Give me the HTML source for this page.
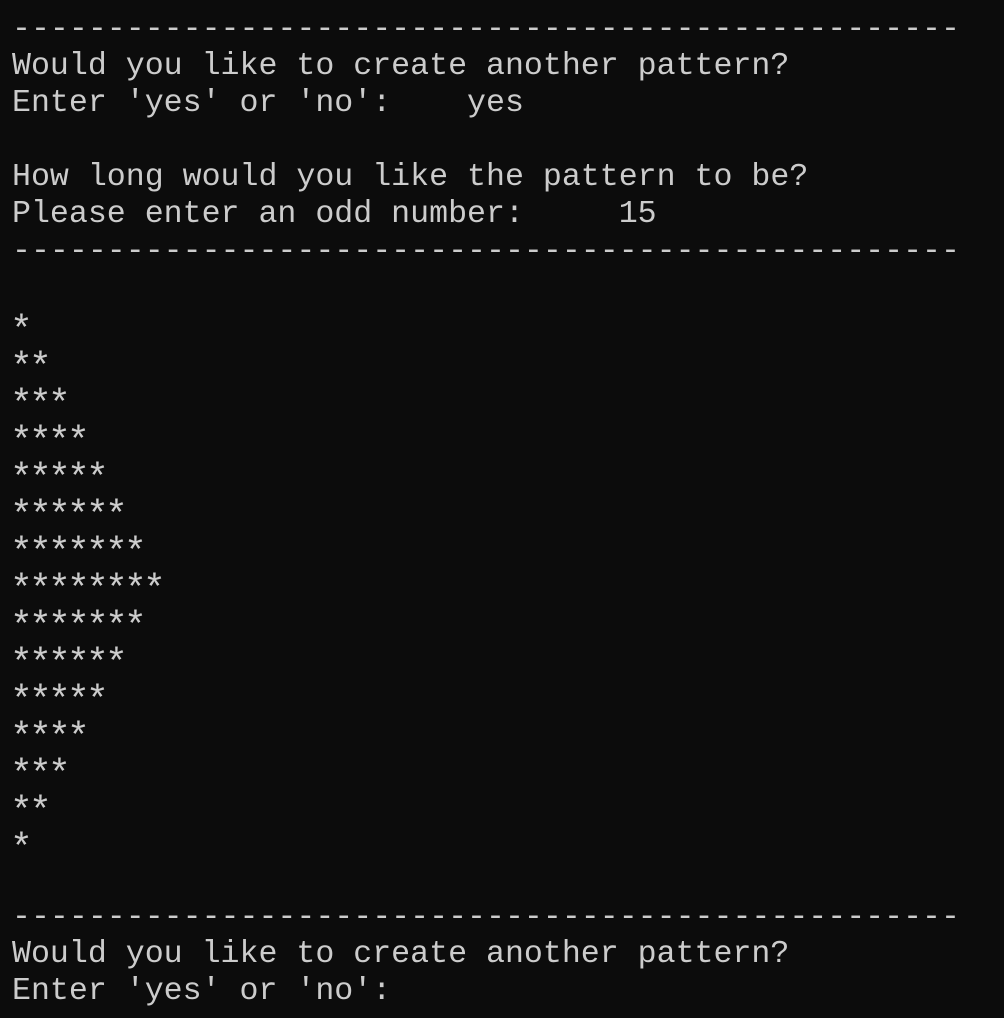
<!DOCTYPE html>
<html><head><meta charset="utf-8"><style>
html,body{margin:0;padding:0;background:#0c0c0c;width:1004px;height:1018px;overflow:hidden}
pre{margin:0;position:absolute;left:12px;top:11px;font-family:"Liberation Mono","DejaVu Sans Mono",monospace;font-size:31.6px;line-height:37px;color:#cccccc;white-space:pre}
.s{font-size:38px;letter-spacing:-3.8px;position:relative;top:8px;left:-2px;line-height:0}
</style></head><body><pre>--------------------------------------------------
Would you like to create another pattern?
Enter 'yes' or 'no':    yes

How long would you like the pattern to be?
Please enter an odd number:     15
--------------------------------------------------

<span class="s">*</span>
<span class="s">**</span>
<span class="s">***</span>
<span class="s">****</span>
<span class="s">*****</span>
<span class="s">******</span>
<span class="s">*******</span>
<span class="s">********</span>
<span class="s">*******</span>
<span class="s">******</span>
<span class="s">*****</span>
<span class="s">****</span>
<span class="s">***</span>
<span class="s">**</span>
<span class="s">*</span>

--------------------------------------------------
Would you like to create another pattern?
Enter 'yes' or 'no':</pre></body></html>
